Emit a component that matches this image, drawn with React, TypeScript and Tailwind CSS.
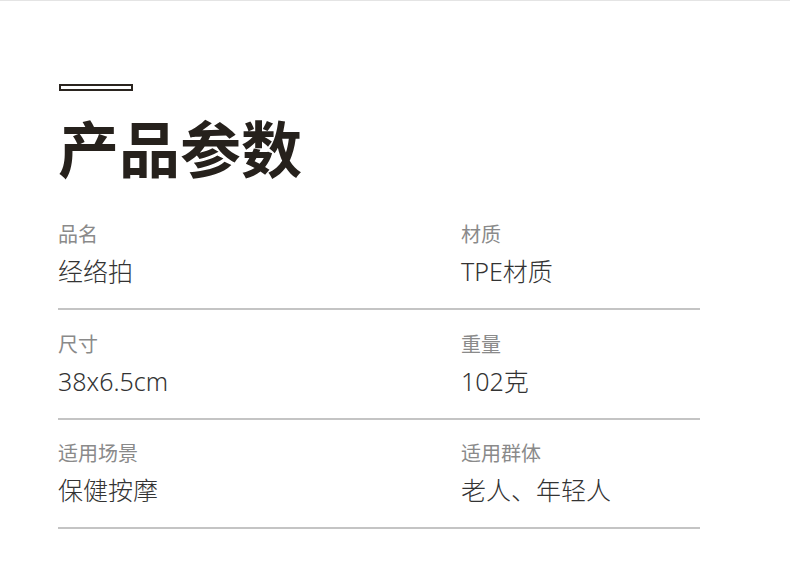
const specs = [
  [
    { label: '品名', value: '经络拍' },
    { label: '材质', value: 'TPE材质' },
  ],
  [
    { label: '尺寸', value: '38x6.5cm' },
    { label: '重量', value: '102克' },
  ],
  [
    { label: '适用场景', value: '保健按摩' },
    { label: '适用群体', value: '老人、年轻人' },
  ],
];

export default function App() {
  return (
    <div
      className="w-[790px] h-[564px] bg-white border-t border-[#e4e4e4] overflow-hidden"
      style={{ fontFamily: '"Noto Sans CJK SC", "Noto Sans", sans-serif' }}
    >
      <div className="pl-[58px] pt-[83px] w-[700px]">
        <div className="ml-px w-[74px] h-[7px] border-2 border-[#2a241f]" />
        <h1 className="mt-[25px] text-[61px] leading-[61px] font-bold text-[#26211c]">产品参数</h1>

        <div className="mt-[43px]">
          {specs.map((row, i) => (
            <div
              key={i}
              className={`grid grid-cols-[403px_1fr] border-b-2 border-[#c4c4c4] pb-[20px] ${i === 0 ? '' : 'pt-[19.5px]'}`}
            >
              {row.map((cell) => (
                <div key={cell.label} className="flex flex-col gap-[7px]">
                  <div className="text-[20px] leading-[28px] text-[#8a8a8a]">{cell.label}</div>
                  <div
                    className="text-[25px] leading-[33px] font-light text-[#333333]"
                    style={{ fontFamily: '"Noto Sans", "Noto Sans CJK SC", sans-serif' }}
                  >
                    {cell.value}
                  </div>
                </div>
              ))}
            </div>
          ))}
        </div>
      </div>
    </div>
  );
}
